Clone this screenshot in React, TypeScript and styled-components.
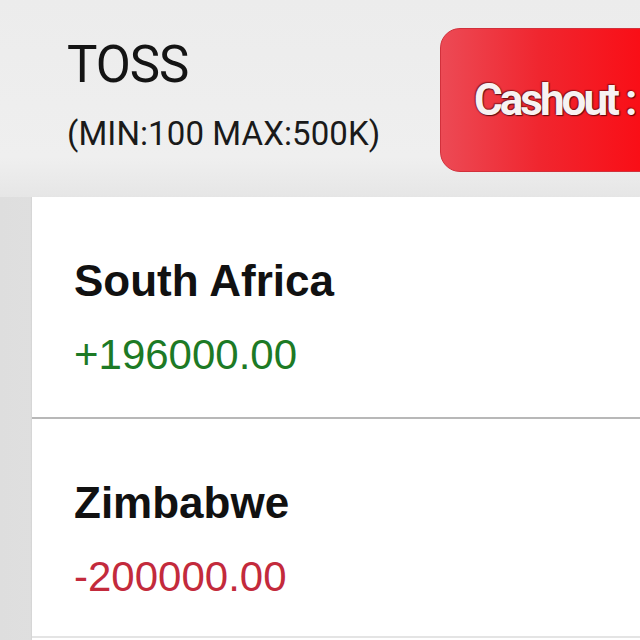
import React from "react";
import styled, { createGlobalStyle } from "styled-components";

const Global = createGlobalStyle`
  html, body { margin: 0; padding: 0; }
  body {
    width: 640px;
    height: 640px;
    overflow: hidden;
    background: #ececec;
    font-family: Roboto, "Liberation Sans", sans-serif;
  }
`;

const Page = styled.div`
  width: 640px;
  height: 640px;
  overflow: hidden;
  display: flex;
  flex-direction: column;
  background: #ededed;
`;

const Header = styled.header`
  height: 197px;
  flex-shrink: 0;
  display: flex;
  align-items: flex-start;
  padding-left: 67px;
  background: linear-gradient(180deg, #ececec 0%, #efefef 80%, #e6e6e6 100%);
`;

const TitleBlock = styled.div`
  flex: 1;
  padding-top: 39px;
  display: flex;
  flex-direction: column;
  gap: 27px;
`;

const Title = styled.div`
  font-family: Roboto, sans-serif;
  font-size: 51px;
  line-height: 51px;
  color: #141414;
  letter-spacing: -1px;
`;

const Limits = styled.div`
  font-family: Roboto, sans-serif;
  font-size: 33px;
  line-height: 33px;
  color: #1a1a1a;
  letter-spacing: 0.1px;
`;

const CashoutButton = styled.button`
  flex-shrink: 0;
  width: 220px;
  height: 144px;
  margin-top: 28px;
  margin-right: -20px;
  border: 1.5px solid #d2303b;
  border-radius: 20px;
  background: linear-gradient(90deg, #ec4a55 0%, #f0262f 45%, #fb0a12 100%);
  display: flex;
  align-items: center;
  padding: 0 0 0 33px;
  overflow: hidden;
  white-space: nowrap;
  font-family: Roboto, sans-serif;
  font-weight: 700;
  font-size: 44px;
  letter-spacing: -3px;
  color: #f7f2f2;
  text-shadow: 0 0 2px #5c0a10, 1px 1px 1px rgba(40, 0, 0, 0.7), -1px -1px 1px rgba(60, 0, 0, 0.4);
`;

const Body = styled.div`
  flex: 1;
  display: flex;
  background: linear-gradient(90deg, #dedede 0%, #e9e9e9 60%, #e2e2e2 100%);
`;

const Card = styled.div`
  margin-left: 32px;
  flex: 1;
  background: #ffffff;
  display: flex;
  flex-direction: column;
  box-shadow: -1px 0 1px rgba(0, 0, 0, 0.04);
`;

const Row = styled.div`
  padding: 62px 0 41px 42px;
  border-bottom: 2px solid #b8b8b8;
  display: flex;
  flex-direction: column;
  gap: 31px;
  &:last-child {
    padding-top: 62px;
    padding-bottom: 38px;
    border-bottom-color: #e4e4e4;
  }
`;

const TeamName = styled.div`
  font-family: "Liberation Sans", Arial, sans-serif;
  font-weight: 700;
  font-size: 44px;
  line-height: 44px;
  color: #111;
`;

const Amount = styled.div<{ $positive: boolean }>`
  font-family: "Liberation Sans", Arial, sans-serif;
  font-size: 42px;
  line-height: 42px;
  color: ${(p) => (p.$positive ? "#1d7a25" : "#c32a3c")};
`;

const teams = [
  { name: "South Africa", amount: "+196000.00", positive: true },
  { name: "Zimbabwe", amount: "-200000.00", positive: false },
];

export default function App() {
  return (
    <>
      <Global />
      <Page>
        <Header>
          <TitleBlock>
            <Title>TOSS</Title>
            <Limits>(MIN:100 MAX:500K)</Limits>
          </TitleBlock>
          <CashoutButton>Cashout : 196000</CashoutButton>
        </Header>
        <Body>
          <Card>
            {teams.map((t) => (
              <Row key={t.name}>
                <TeamName>{t.name}</TeamName>
                <Amount $positive={t.positive}>{t.amount}</Amount>
              </Row>
            ))}
          </Card>
        </Body>
      </Page>
    </>
  );
}
